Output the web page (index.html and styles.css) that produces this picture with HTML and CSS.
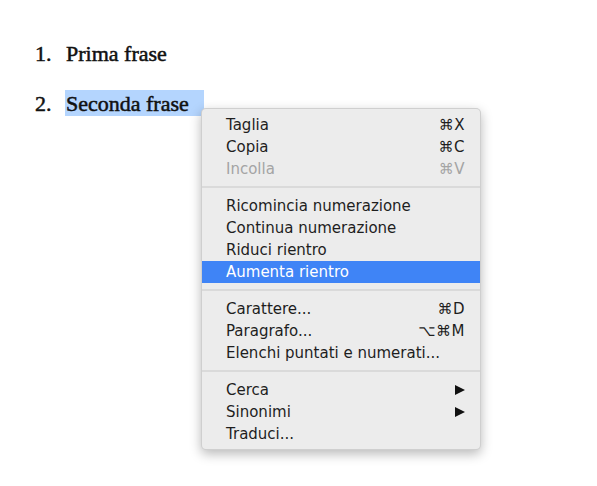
FILE: index.html
```html
<!DOCTYPE html>
<html lang="it">
<head>
<meta charset="UTF-8">
<title>Menu contestuale</title>
<link rel="stylesheet" href="styles.css">
</head>
<body>

<div class="page">
    <ol class="list">
        <li><span class="num">1.</span><div class="txt">Prima frase</div></li>
        <li><span class="num">2.</span><div class="txt"><span class="sel">Seconda frase</span></div></li>
    </ol>

    <div class="menu">
        <div class="item"><span>Taglia</span><span class="key">&#8984;X</span></div>
        <div class="item"><span>Copia</span><span class="key">&#8984;C</span></div>
        <div class="item off"><span>Incolla</span><span class="key">&#8984;V</span></div>
        <div class="sep"></div>
        <div class="item"><span>Ricomincia numerazione</span></div>
        <div class="item"><span>Continua numerazione</span></div>
        <div class="item"><span>Riduci rientro</span></div>
        <div class="item active"><span>Aumenta rientro</span></div>
        <div class="sep"></div>
        <div class="item"><span>Carattere...</span><span class="key">&#8984;D</span></div>
        <div class="item"><span>Paragrafo...</span><span class="key">&#8997;&#8984;M</span></div>
        <div class="item"><span>Elenchi puntati e numerati...</span></div>
        <div class="sep"></div>
        <div class="item"><span>Cerca</span><span class="arrow"></span></div>
        <div class="item"><span>Sinonimi</span><span class="arrow"></span></div>
        <div class="item"><span>Traduci...</span></div>
    </div>
</div>

</body>
</html>
```

FILE: styles.css
```css
body {
    margin: 0;
    background-color: #fff;
}
.page {
    position: relative;
    width: 597px;
    height: 486px;
}
.list {
    list-style: none;
    margin: 0;
    padding: 29px 0 0 35px;
    font-family: "Liberation Serif", serif;
    font-size: 22px;
    line-height: 50px;
    color: #111;
    -webkit-text-stroke: 0.5px #111;
}
.list li {
    display: flex;
}
.num {
    width: 31px;
}
.sel {
    background-color: #b4d5fe;
    padding: 1px 15px 0 1px;
    margin-left: -1px;
}

/* context menu */
.menu {
    position: absolute;
    left: 201px;
    top: 108px;
    width: 280px;
    padding: 5px 0 4px;
    box-sizing: border-box;
    background-color: #ececec;
    border-radius: 5px;
    border: 1px solid rgba(0,0,0,0.12);
    box-shadow: 0px 4px 12px rgba(0,0,0,0.28);
    font-family: "DejaVu Sans", sans-serif;
    font-size: 15px;
    color: #1e1e1e;
}
.item {
    display: flex;
    justify-content: space-between;
    align-items: center;
    height: 22px;
    padding: 0 15px 0 24px;
}
.item.off {
    color: #a4a4a4;
}
.item.active {
    background-color: #3f84f6;
    color: #fff;
}
.key {
    letter-spacing: 0.5px;
}
.arrow {
    width: 0;
    height: 0;
    border-top: 5px solid transparent;
    border-bottom: 5px solid transparent;
    border-left: 10px solid #111;
}
.sep {
    height: 2px;
    margin: 6px 0 7px;
    background-color: #dadada;
}
```
